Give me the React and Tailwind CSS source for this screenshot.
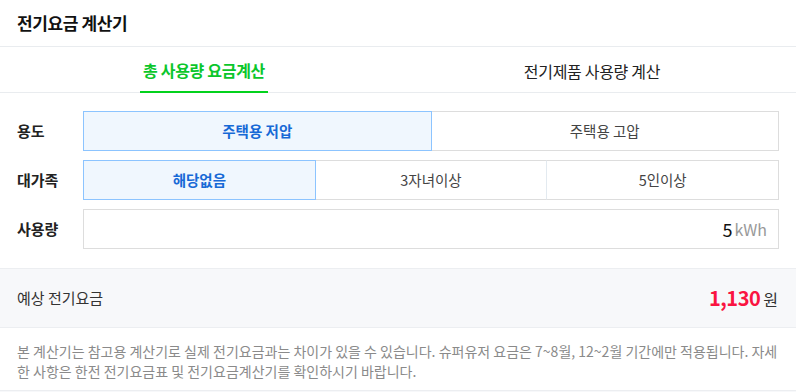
import React from "react";

const font = { fontFamily: '"Noto Sans CJK KR", "Noto Sans", sans-serif' };

export default function App() {
  return (
    <div className="w-[796px] h-[392px] bg-white text-[#222] overflow-hidden" style={font}>
      <div className="h-[47px] px-[17px] flex items-center border-b border-[#e9ecef]">
        <h1 className="text-[17px] font-bold text-[#111] tracking-[-0.4px]">전기요금 계산기</h1>
      </div>
      <div className="h-[46px] px-[10px] flex border-b border-[#e9ecef]">
        <div className="flex-1 flex justify-center items-stretch">
          <span className="px-[3px] flex items-center pt-[2px] border-b-2 border-[#03d21d] text-[16px] font-bold text-[#0bc62b] tracking-[-0.3px] -mb-px">총 사용량 요금계산</span>
        </div>
        <div className="flex-1 flex justify-center items-center pt-[2px]">
          <span className="text-[16px] text-[#222] tracking-[-0.3px]">전기제품 사용량 계산</span>
        </div>
      </div>
      <div className="px-[17px] pt-[18px] pb-[19px] flex flex-col gap-[9px] border-b border-[#eceef1]">
        <div className="flex items-center">
          <div className="w-[66px] text-[15px] font-bold text-[#222]">용도</div>
          <div className="flex-1 flex h-[40px] text-[14.5px]">
            <div className="flex-1 flex items-center justify-center border border-[#8cc4ff] bg-[#f0f7fe] text-[#1769d6] font-bold">주택용 저압</div>
            <div className="flex-1 flex items-center justify-center border border-l-0 border-[#dddddd] text-[#444]">주택용 고압</div>
          </div>
        </div>
        <div className="flex items-center">
          <div className="w-[66px] text-[15px] font-bold text-[#222]">대가족</div>
          <div className="flex-1 flex h-[40px] text-[14.5px]">
            <div className="flex-1 flex items-center justify-center border border-[#8cc4ff] bg-[#f0f7fe] text-[#1769d6] font-bold">해당없음</div>
            <div className="flex-1 flex items-center justify-center border-y border-[#dddddd] text-[#444]">3자녀이상</div>
            <div className="flex-1 flex items-center justify-center border border-[#dddddd] border-l-[#e3eaf0] text-[#444]">5인이상</div>
          </div>
        </div>
        <div className="flex items-center">
          <div className="w-[66px] text-[15px] font-bold text-[#222]">사용량</div>
          <div className="flex-1 flex h-[40px] items-center justify-end border border-[#dddddd] pr-[11px]">
            <span className="text-[18px] text-[#111]">5</span>
            <span className="text-[16px] text-[#999] ml-[2px]">kWh</span>
          </div>
        </div>
      </div>
      <div className="h-[59px] px-[17px] flex items-center justify-between bg-[#f7f8fa] border-b border-[#eceef1]">
        <span className="text-[15px] text-[#333]">예상 전기요금</span>
        <span className="flex items-baseline pr-[1px]">
          <span className="text-[20px] font-bold text-[#fa1441] tracking-[-0.5px]">1,130</span>
          <span className="text-[16px] text-[#333] ml-[3px]">원</span>
        </span>
      </div>
      <div className="px-[17px] pt-[14px] pb-[9px] text-[14px] leading-[19.5px] text-[#8a8a8a] border-b border-[#eceef1]">
        본 계산기는 참고용 계산기로 실제 전기요금과는 차이가 있을 수 있습니다. 슈퍼유저 요금은 7~8월, 12~2월 기간에만 적용됩니다. 자세한 사항은 한전 전기요금표 및 전기요금계산기를 확인하시기 바랍니다.
      </div>
      <div className="h-[10px] bg-[#f7f8fa]"></div>
    </div>
  );
}
